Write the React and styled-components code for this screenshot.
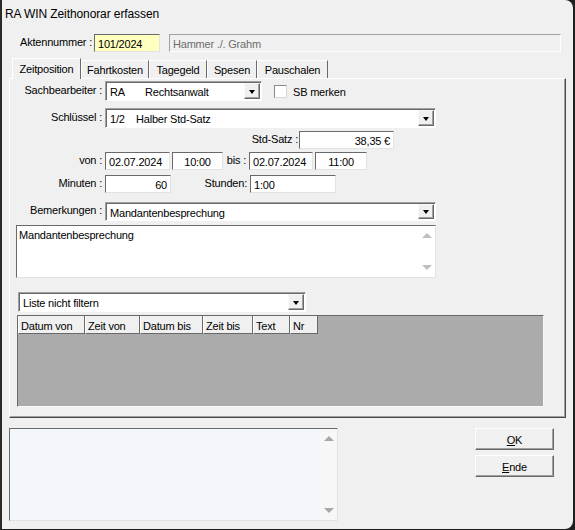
import React from "react";
import styled, { createGlobalStyle } from "styled-components";

const GlobalStyle = createGlobalStyle`
  html, body { margin: 0; padding: 0; background: #1f1f1f; }
  body { font-family: "Liberation Sans", Arial, sans-serif; font-size: 11px; letter-spacing: -0.2px; color: #000; }
  #root { width: 575px; height: 530px; }
`;

const Window = styled.div`
  width: 573px;
  height: 529px;
  box-sizing: border-box;
  background: #f0f0f0;
  border-radius: 0 8px 8px 0;
  box-shadow: inset 2px 0 0 #2a2a2a;
  display: flex;
  flex-direction: column;
  overflow: hidden;
`;

const TitleBar = styled.div`
  height: 28px;
  display: flex;
  align-items: center;
  padding-left: 5px;
  font-size: 12px;
  letter-spacing: -0.1px;
  color: #000;
  flex-shrink: 0;
`;

const Row = styled.div`
  display: flex;
  align-items: center;
  height: ${(p) => p.$h || 18}px;
  margin-top: ${(p) => p.$mt || 0}px;
  margin-left: ${(p) => p.$ml || 0}px;
  flex-shrink: 0;
`;

const Label = styled.div`
  width: ${(p) => p.$w}px;
  box-sizing: border-box;
  text-align: right;
  padding-right: ${(p) => (p.$pr !== undefined ? p.$pr : 3)}px;
  white-space: nowrap;
  flex-shrink: 0;
  line-height: 13px;
  margin-top: -2px;
`;

const Field = styled.div`
  width: ${(p) => p.$w}px;
  height: ${(p) => p.$h || 18}px;
  margin-left: ${(p) => p.$ml || 0}px;
  box-sizing: border-box;
  background: ${(p) => p.$bg || "#fff"};
  border: 1px solid;
  border-color: #6a6a6a #e3e3e3 #e3e3e3 #6a6a6a;
  display: flex;
  align-items: center;
  justify-content: ${(p) =>
    p.$align === "right" ? "flex-end" : p.$align === "center" ? "center" : "flex-start"};
  padding: 0 3px;
  padding-top: 2px;
  color: ${(p) => p.$color || "#000"};
  white-space: pre;
  flex-shrink: 0;
`;

const DisabledField = styled(Field)`
  border-color: #a0a0a0 #fff #fff #a0a0a0;
  background: #f0f0f0;
  color: #6d6d6d;
`;

const Combo = styled.div`
  width: ${(p) => p.$w}px;
  height: ${(p) => p.$h || 20}px;
  margin-left: ${(p) => p.$ml || 0}px;
  box-sizing: border-box;
  background: #fff;
  border: 1px solid;
  border-color: #a0a0a0 #fff #fff #a0a0a0;
  box-shadow: inset 1px 1px 0 #696969;
  display: flex;
  align-items: center;
  padding: 1px 1px 1px 4px;
  flex-shrink: 0;
`;

const ComboText = styled.div`
  flex: 1;
  display: flex;
  align-items: center;
  white-space: nowrap;
  padding-top: 2px;
`;

const Col = styled.span`
  display: inline-block;
  width: ${(p) => p.$w}px;
`;

const DropButton = styled.div`
  width: 16px;
  height: 100%;
  box-sizing: border-box;
  background: #f0f0f0;
  border: 1px solid;
  border-color: #f8f8f8 #696969 #696969 #f8f8f8;
  box-shadow: inset -1px -1px 0 #a0a0a0;
  display: flex;
  align-items: center;
  justify-content: center;
  &::after {
    content: "";
    width: 0;
    height: 0;
    border-left: 3.5px solid transparent;
    border-right: 3.5px solid transparent;
    border-top: 4px solid #000;
    margin-top: 1px;
  }
`;

const CheckBox = styled.div`
  width: 13px;
  height: 13px;
  margin-left: 12px;
  box-sizing: border-box;
  background: #fff;
  border: 1px solid;
  border-color: #8a8a8a #d8d8d8 #d8d8d8 #8a8a8a;
  flex-shrink: 0;
`;

const CheckLabel = styled.span`
  margin-left: 6px;
  padding-top: 1px;
`;

const AkteRow = styled(Row)`
  margin-top: 6px;
`;

const TabStrip = styled.div`
  display: flex;
  align-items: flex-end;
  height: 20px;
  margin-top: 6px;
  padding-left: 12px;
  flex-shrink: 0;
`;

const Tab = styled.div`
  width: ${(p) => p.$w}px;
  height: ${(p) => (p.$active ? 21 : 18)}px;
  box-sizing: border-box;
  border-left: 1px solid #fff;
  border-right: 1px solid #696969;
  border-top: 1px solid #fff;
  background: #f0f0f0;
  display: flex;
  align-items: center;
  justify-content: center;
  padding-top: ${(p) => (p.$active ? 0 : 1)}px;
  position: relative;
  z-index: ${(p) => (p.$active ? 2 : 1)};
  margin-bottom: ${(p) => (p.$active ? -1 : 0)}px;
  flex-shrink: 0;
`;

const Panel = styled.div`
  margin-left: 9px;
  width: 557px;
  height: 340px;
  box-sizing: border-box;
  border: 1px solid;
  border-color: #fff #4a4a4a #4a4a4a #fff;
  box-shadow: inset -1px -1px 0 #a0a0a0;
  display: flex;
  flex-direction: column;
  flex-shrink: 0;
`;

const Memo = styled.div`
  width: ${(p) => p.$w}px;
  height: ${(p) => p.$h}px;
  margin-top: ${(p) => p.$mt || 0}px;
  margin-left: ${(p) => p.$ml || 0}px;
  box-sizing: border-box;
  background: ${(p) => p.$bg || "#fff"};
  border: 1px solid;
  border-color: #6a6a6a #e3e3e3 #e3e3e3 #6a6a6a;
  display: flex;
  flex-shrink: 0;
`;

const MemoText = styled.div`
  flex: 1;
  padding: 3px 2px;
`;

const ScrollCol = styled.div`
  width: 17px;
  background: ${(p) => p.$bg || "#fff"};
  display: flex;
  flex-direction: column;
  justify-content: space-between;
  align-items: center;
  padding: 7px 0;
`;

const Arrow = styled.div`
  width: 0;
  height: 0;
  border-left: 5px solid transparent;
  border-right: 5px solid transparent;
  ${(p) =>
    p.$down
      ? `border-top: 5px solid ${p.$c || "#bfbfbf"};`
      : `border-bottom: 5px solid ${p.$c || "#bfbfbf"};`}
`;

const Grid = styled.div`
  width: 527px;
  height: 92px;
  margin-top: 3px;
  margin-left: 7px;
  box-sizing: border-box;
  background: #ababab;
  border: 1px solid;
  border-color: #696969 #f8f8f8 #f8f8f8 #696969;
  flex-shrink: 0;
`;

const HeaderRow = styled.div`
  display: flex;
  height: 18px;
`;

const HeaderCell = styled.div`
  width: ${(p) => p.$w}px;
  box-sizing: border-box;
  background: #f0f0f0;
  border-left: 1px solid #fff;
  border-right: 1px solid #696969;
  border-bottom: 1px solid #696969;
  padding: 2px 0 0 2px;
  display: flex;
  align-items: center;
  white-space: nowrap;
`;

const Bottom = styled.div`
  display: flex;
  margin-top: 10px;
  padding-left: 9px;
  padding-right: 19px;
  flex-shrink: 0;
`;

const Buttons = styled.div`
  margin-left: auto;
  display: flex;
  flex-direction: column;
  gap: 5px;
`;

const Button = styled.div`
  width: 79px;
  height: 22px;
  box-sizing: border-box;
  background: #f0f0f0;
  border: 1px solid;
  border-color: #fff #696969 #696969 #fff;
  box-shadow: inset -1px -1px 0 #a0a0a0;
  display: flex;
  align-items: center;
  justify-content: center;
  padding-top: 1px;
  u { text-decoration: underline; }
`;

export default function App() {
  return (
    <>
      <GlobalStyle />
      <Window>
        <TitleBar>RA WIN Zeithonorar erfassen</TitleBar>

        <AkteRow>
          <Label $w={94} $pr={2}>Aktennummer :</Label>
          <Field $w={66} $bg="#ffffc0">101/2024</Field>
          <DisabledField $w={392} $ml={9}>Hammer ./. Grahm</DisabledField>
        </AkteRow>

        <TabStrip>
          <Tab $w={69} $active>Zeitposition</Tab>
          <Tab $w={68}>Fahrtkosten</Tab>
          <Tab $w={58}>Tagegeld</Tab>
          <Tab $w={50}>Spesen</Tab>
          <Tab $w={71}>Pauschalen</Tab>
        </TabStrip>

        <Panel>
          <Row $h={20} $mt={2}>
            <Label $w={95}>Sachbearbeiter :</Label>
            <Combo $w={157}>
              <ComboText>
                <Col $w={35}>RA</Col>Rechtsanwalt
              </ComboText>
              <DropButton />
            </Combo>
            <CheckBox />
            <CheckLabel>SB merken</CheckLabel>
          </Row>

          <Row $h={20} $mt={7}>
            <Label $w={95}>Schlüssel :</Label>
            <Combo $w={331}>
              <ComboText>
                <Col $w={26}>1/2</Col>Halber Std-Satz
              </ComboText>
              <DropButton />
            </Combo>
          </Row>

          <Row $mt={3}>
            <Label $w={289} $pr={1}>Std-Satz :</Label>
            <Field $w={95} $align="right">38,35 €</Field>
          </Row>

          <Row $mt={3}>
            <Label $w={95}>von :</Label>
            <Field $w={65}>02.07.2024</Field>
            <Field $w={51} $ml={2} $align="center">10:00</Field>
            <Label $w={26}>bis :</Label>
            <Field $w={64}>02.07.2024</Field>
            <Field $w={52} $ml={2} $align="center">11:00</Field>
          </Row>

          <Row $mt={5}>
            <Label $w={95}>Minuten :</Label>
            <Field $w={66} $align="right">60</Field>
            <Label $w={79}>Stunden:</Label>
            <Field $w={86}>1:00</Field>
          </Row>

          <Row $h={19} $mt={9}>
            <Label $w={95}>Bemerkungen :</Label>
            <Combo $w={331} $h={19}>
              <ComboText>Mandantenbesprechung</ComboText>
              <DropButton />
            </Combo>
          </Row>

          <Memo $w={420} $h={53} $mt={4} $ml={6}>
            <MemoText>Mandantenbesprechung</MemoText>
            <ScrollCol>
              <Arrow />
              <Arrow $down />
            </ScrollCol>
          </Memo>

          <Row $h={20} $mt={14} $ml={8}>
            <Combo $w={288}>
              <ComboText>Liste nicht filtern</ComboText>
              <DropButton />
            </Combo>
          </Row>

          <Grid>
            <HeaderRow>
              <HeaderCell $w={67}>Datum von</HeaderCell>
              <HeaderCell $w={55}>Zeit von</HeaderCell>
              <HeaderCell $w={63}>Datum bis</HeaderCell>
              <HeaderCell $w={50}>Zeit bis</HeaderCell>
              <HeaderCell $w={37}>Text</HeaderCell>
              <HeaderCell $w={28}>Nr</HeaderCell>
            </HeaderRow>
          </Grid>
        </Panel>

        <Bottom>
          <Memo $w={329} $h={93} $bg="#f3f7fc">
            <MemoText />
            <ScrollCol $bg="#f7f7f7">
              <Arrow $c="#a8a8a8" />
              <Arrow $down $c="#a8a8a8" />
            </ScrollCol>
          </Memo>
          <Buttons>
            <Button>
              <span><u>O</u>K</span>
            </Button>
            <Button>
              <span><u>E</u>nde</span>
            </Button>
          </Buttons>
        </Bottom>
      </Window>
    </>
  );
}
